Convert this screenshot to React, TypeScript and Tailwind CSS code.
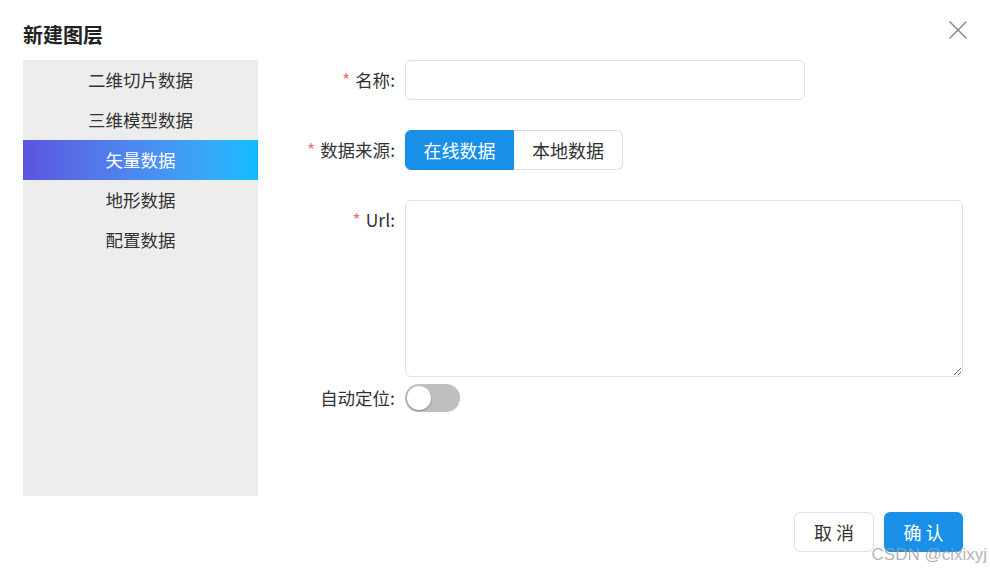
import { X } from "lucide-react";

const menu = ["二维切片数据", "三维模型数据", "矢量数据", "地形数据", "配置数据"];

function Label({ text, required }: { text: string; required?: boolean }) {
  return (
    <div className="w-[138px] shrink-0 text-right leading-[40px] text-[17.5px] text-[#333] pr-[1px]">
      {required && <span className="text-[#f56c6c] mr-[5px]">*</span>}
      {text}:
    </div>
  );
}

export default function App() {
  return (
    <div
      className="w-[990px] h-[571px] bg-white relative overflow-hidden"
      style={{ fontFamily: '"Noto Sans CJK SC", "Noto Sans", sans-serif' }}
    >
      {/* Header */}
      <div className="flex items-start justify-between pl-[23px] pr-[16px] h-[60px]">
        <h2 className="mt-[21px] text-[20px] leading-[28px] font-bold text-[#222]">新建图层</h2>
        <button className="mt-[14px] text-[#888]">
          <X className="w-[32px] h-[32px]" strokeWidth={1.1} />
        </button>
      </div>

      {/* Body */}
      <div className="flex pl-[23px] pr-[27px] h-[436px]">
        <div className="w-[235px] shrink-0 bg-[#ededed]">
          {menu.map((m) => (
            <div
              key={m}
              className={
                m === "矢量数据"
                  ? "h-[40px] flex items-center justify-center text-[17.5px] text-white bg-gradient-to-r from-[#5b55e0] to-[#0bbcff]"
                  : "h-[40px] flex items-center justify-center text-[17.5px] text-[#333]"
              }
            >
              {m}
            </div>
          ))}
        </div>

        <div className="flex-1 flex flex-col">
          <div className="flex mb-[30px]">
            <Label text="名称" required />
            <input className="ml-[9px] w-[400px] h-[40px] rounded-[6px] border border-[#dcdfe6] outline-none px-3" />
          </div>

          <div className="flex mb-[30px]">
            <Label text="数据来源" required />
            <div className="ml-[9px] flex h-[40px] text-[18px]">
              <div className="w-[109px] flex items-center justify-center bg-[#1890e8] text-white rounded-l-[6px] border border-[#1890e8]">
                在线数据
              </div>
              <div className="w-[109px] flex items-center justify-center text-[#333] rounded-r-[6px] border border-l-0 border-[#dcdfe6]">
                本地数据
              </div>
            </div>
          </div>

          <div className="flex mb-[7px]">
            <Label text="Url" required />
            <textarea className="ml-[9px] w-[558px] h-[177px] rounded-[6px] border border-[#dcdfe6] outline-none px-3 py-2" />
          </div>

          <div className="flex items-center">
            <div className="w-[138px] shrink-0 text-right text-[17.5px] text-[#333] pr-[1px] leading-[28px]">
              自动定位:
            </div>
            <div className="ml-[9px] w-[55px] h-[28px] rounded-full bg-[#bfbfbf] p-[2px] flex items-center">
              <div className="w-[24px] h-[24px] rounded-full bg-white shadow-[0_1px_2px_rgba(0,0,0,0.3)]" />
            </div>
          </div>
        </div>
      </div>

      {/* Footer */}
      <div className="flex justify-end gap-[10px] pr-[27px] pt-[16px]">
        <button className="w-[80px] h-[40px] rounded-[6px] border border-[#dcdfe6] bg-white text-[18px] text-[#333] tracking-[4px] pl-[4px]">
          取消
        </button>
        <button className="w-[79px] h-[40px] rounded-[6px] bg-[#1890e8] text-[18px] text-white tracking-[4px] pl-[4px]">
          确认
        </button>
      </div>

      <div
        className="absolute right-[3px] bottom-[8px] text-[17px] text-[#a0a0a0]/80 leading-none"
        style={{ fontFamily: '"Liberation Sans", Arial, sans-serif' }}
      >
        CSDN @cixixyj
      </div>
    </div>
  );
}
